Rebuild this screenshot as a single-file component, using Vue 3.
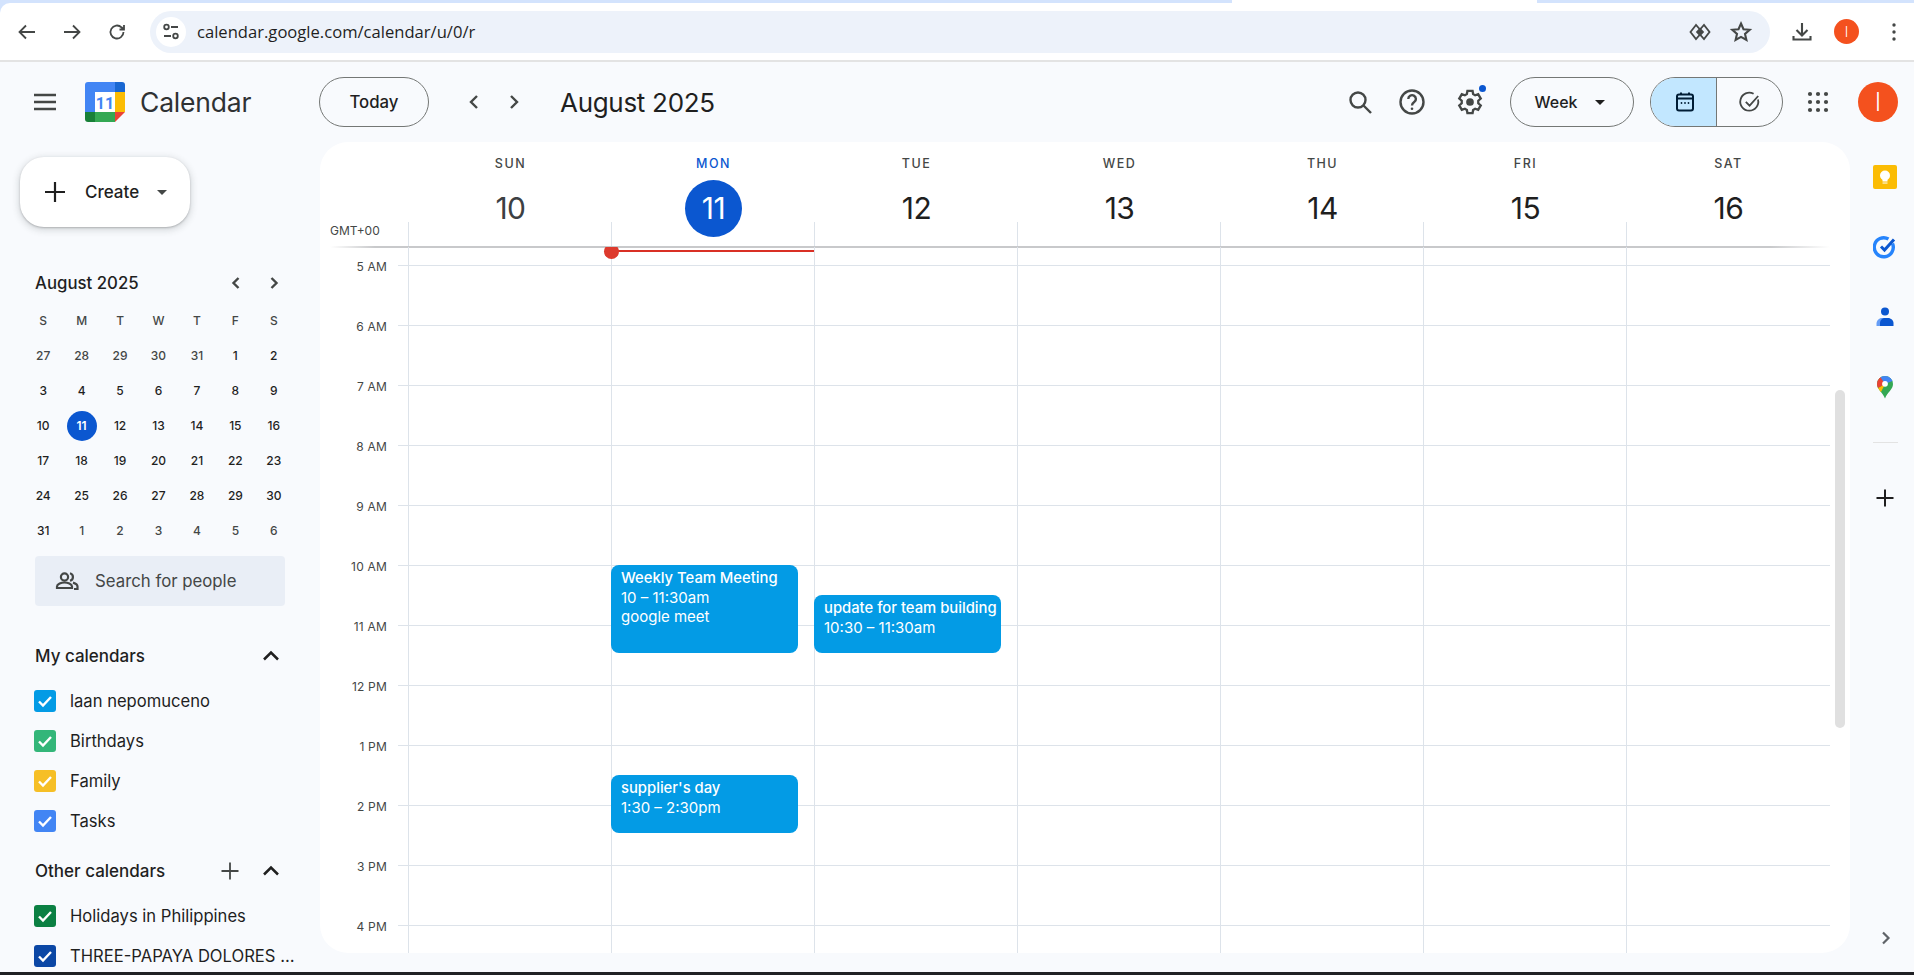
<script setup>
const weekDays = [
  { name: 'SUN', num: 10 }, { name: 'MON', num: 11, today: true }, { name: 'TUE', num: 12 },
  { name: 'WED', num: 13 }, { name: 'THU', num: 14 }, { name: 'FRI', num: 15 }, { name: 'SAT', num: 16 }
]
const hours = ['5 AM','6 AM','7 AM','8 AM','9 AM','10 AM','11 AM','12 PM','1 PM','2 PM','3 PM','4 PM']
const cells = [0,1,2,3,4,5,6]
const miniHead = ['S','M','T','W','T','F','S']
const mini = [
  [27,28,29,30,31,1,2],[3,4,5,6,7,8,9],[10,11,12,13,14,15,16],[17,18,19,20,21,22,23],
  [24,25,26,27,28,29,30],[31,1,2,3,4,5,6]
]
const muted = (r, c) => (r === 0 && c < 5) || r === 5 && c > 0
const myCals = [
  { n: 'laan nepomuceno', c: '#039be5' }, { n: 'Birthdays', c: '#33b679' },
  { n: 'Family', c: '#f6bf26' }, { n: 'Tasks', c: '#4285f4' }
]
const otherCals = [
  { n: 'Holidays in Philippines', c: '#0b8043' }, { n: 'THREE-PAPAYA DOLORES CONSTRUCTION', c: '#0b47a5' }
]
const events = [
  { t: 'Weekly Team Meeting', l: ['10 – 11:30am', 'google meet'], x: 213, y: 318, w: 187, h: 88 },
  { t: 'update for team building', l: ['10:30 – 11:30am'], x: 416, y: 348, w: 187, h: 58 },
  { t: "supplier's day", l: ['1:30 – 2:30pm'], x: 213, y: 528, w: 187, h: 58 }
]
const box = (e) => ({ left: e.x + 'px', top: e.y + 'px', width: e.w + 'px', height: e.h + 'px' })
</script>

<template>
  <div class="page">
    <div class="chrome-wrap">
      <div class="tabstrip"><div class="strip-a"></div><div class="strip-gap"></div><div class="strip-b"></div></div>
      <div class="chrome">
        <div class="nav">
          <svg width="24" height="24" viewBox="0 0 24 24"><path d="M20 12H5M11 5.500 4.500 12l6.500 6.500" class="ci"/></svg>
          <svg width="24" height="24" viewBox="0 0 24 24"><path d="M4 12h15M13 5.500 19.500 12 13 18.500" class="ci"/></svg>
          <svg width="24" height="24" viewBox="0 0 24 24"><path d="M18.500 12a6.500 6.500 0 1 1-2-4.700L19 9.500M19 5v4.500h-4.500" class="ci"/></svg>
        </div>
        <div class="omnibox">
          <span class="site">
            <svg width="20" height="20" viewBox="0 0 20 20"><circle cx="5.500" cy="5" r="2.300" class="ci"/><path d="M10 5h7M3 14h7" class="ci"/><circle cx="14.500" cy="14" r="2.300" class="ci"/></svg>
          </span>
          <span class="url">calendar.google.com/calendar/u/0/r</span>
          <svg class="diamond" width="22" height="22" viewBox="0 0 22 22"><path d="M7 4 1.500 11 7 18l4-4.500L15 18l5.500-7L15 4l-4 4.500z" fill="none" stroke="#444746" stroke-width="1.800"/><path d="M11 6.500 15.200 11 11 15.500 6.800 11z" fill="#444746"/></svg>
          <svg class="star" width="24" height="24" viewBox="0 0 24 24"><path d="m12 3.500 2.500 5.700 6.200.6-4.700 4.100 1.400 6.100L12 16.900l-5.400 3.100L8 13.900 3.300 9.800l6.200-.6z" class="ci bold"/></svg>
        </div>
        <div class="chrome-right">
          <svg width="24" height="24" viewBox="0 0 24 24"><path d="M12 3v12M6.500 10l5.500 5.500 5.500-5.500M3.500 16v3.500h17V16" class="ci bold"/></svg>
          <span class="ava-small">I</span>
          <svg width="20" height="24" viewBox="0 0 20 24"><circle cx="10" cy="5" r="1.700" fill="#444746"/><circle cx="10" cy="12" r="1.700" fill="#444746"/><circle cx="10" cy="19" r="1.700" fill="#444746"/></svg>
        </div>
      </div>
    </div>

    <div class="app">
      <header class="topbar">
        <div class="brand">
          <svg class="burger" width="24" height="24" viewBox="0 0 24 24"><path d="M1 3.800h22v2.400H1zM1 10.800h22v2.400H1zM1 17.800h22v2.400H1z" fill="#444746"/></svg>
          <svg class="logo" width="40" height="40" viewBox="0 0 40 40">
            <path d="M10 0h20v10H10z" fill="#4285f4"/>
            <path d="M30 0h7a3 3 0 0 1 3 3v7H30z" fill="#1967d2"/>
            <path d="M0 3a3 3 0 0 1 3-3h7v30H0z" fill="#4285f4"/>
            <path d="M30 10h10v20H30z" fill="#fbbc04"/>
            <path d="M10 30h20v10H10z" fill="#34a853"/>
            <path d="M0 30h10v10H3a3 3 0 0 1-3-3z" fill="#188038"/>
            <path d="M30 30h10L30 40z" fill="#ea4335"/>
            <rect x="10" y="10" width="20" height="20" fill="#fff"/>
            <text x="20" y="26.500" text-anchor="middle" class="logo-num">11</text>
          </svg>
          <span class="brand-name">Calendar</span>
        </div>
        <button class="pill today-btn">Today</button>
        <div class="range-nav">
          <svg width="24" height="24" viewBox="0 0 24 24"><path d="M15 6 9 12l6 6" class="chev"/></svg>
          <svg width="24" height="24" viewBox="0 0 24 24"><path d="m9 6 6 6-6 6" class="chev"/></svg>
        </div>
        <h1 class="range">August 2025</h1>
        <div class="tools">
          <svg width="28" height="28" viewBox="0 0 28 28"><circle cx="12" cy="12" r="7.500" class="ti"/><path d="m17.500 17.500 7.500 7.500" class="ti"/></svg>
          <svg width="28" height="28" viewBox="0 0 28 28"><circle cx="14" cy="14" r="11.500" class="ti"/><path d="M10.300 11a3.800 3.800 0 1 1 5.900 3.100c-1.300.9-2.200 1.600-2.200 3.400" class="ti"/><circle cx="14" cy="20.800" r="1.300" fill="#444746"/></svg>
          <span class="gear">
            <svg width="28" height="28" viewBox="0 0 24 24"><path d="m9.800 2.500h4.400l.5 2.700 1.700 1 2.600-.9 2.200 3.800-2.100 1.800v2.200l2.100 1.800-2.200 3.800-2.600-.9-1.700 1-.5 2.700H9.800l-.5-2.700-1.700-1-2.600.9-2.200-3.800 2.100-1.800v-2.200L2.800 9.100 5 5.300l2.600.9 1.700-1z" class="ti2"/><circle cx="12" cy="12" r="3.300" fill="#444746"/></svg>
            <i class="gear-dot"></i>
          </span>
        </div>
        <button class="pill week">Week <i class="caret"></i></button>
        <div class="switch">
          <span class="sw on">
            <svg width="24" height="24" viewBox="0 0 24 24"><rect x="4" y="4.500" width="16" height="16" rx="2" fill="none" stroke="#001d35" stroke-width="2"/><path d="M4 8.500h16M8 2.500v2M16 2.500v2" stroke="#001d35" stroke-width="2" fill="none"/><circle cx="8.500" cy="13" r=".9" fill="#001d35"/><circle cx="12" cy="13" r=".9" fill="#001d35"/><circle cx="15.500" cy="13" r=".9" fill="#001d35"/></svg>
          </span>
          <span class="sw">
            <svg width="24" height="24" viewBox="0 0 24 24"><path d="M20 9.500a9 9 0 1 1-4.400-5.700" class="ti3"/><path d="m7.800 11.800 3.800 3.800 8.600-9.600" class="ti3"/></svg>
          </span>
        </div>
        <svg class="apps" width="24" height="24" viewBox="0 0 24 24"><g fill="#444746"><circle cx="4" cy="4" r="2.100"/><circle cx="12" cy="4" r="2.100"/><circle cx="20" cy="4" r="2.100"/><circle cx="4" cy="12" r="2.100"/><circle cx="12" cy="12" r="2.100"/><circle cx="20" cy="12" r="2.100"/><circle cx="4" cy="20" r="2.100"/><circle cx="12" cy="20" r="2.100"/><circle cx="20" cy="20" r="2.100"/></g></svg>
        <span class="avatar">I</span>
      </header>

      <div class="body">
        <aside class="side">
          <button class="create">
            <svg width="24" height="24" viewBox="0 0 24 24"><path d="M12 2v20M2 12h20" stroke="#1f1f1f" stroke-width="2.200" fill="none"/></svg>
            <span>Create</span>
            <i class="caret grey"></i>
          </button>

          <div class="mini-title">
            <span>August 2025</span>
            <div class="mini-nav">
              <svg width="20" height="20" viewBox="0 0 20 20"><path d="M12.500 5 7.500 10l5 5" class="chev"/></svg>
              <svg width="20" height="20" viewBox="0 0 20 20"><path d="m7.500 5 5 5-5 5" class="chev"/></svg>
            </div>
          </div>
          <div class="mini-grid">
            <span v-for="(h, i) in miniHead" :key="'h' + i" class="mini-h">{{ h }}</span>
            <template v-for="(row, r) in mini" :key="r">
              <span v-for="(d, c) in row" :key="c" class="mini-d" :class="{ muted: muted(r, c) }">
                <b v-if="d === 11 && r === 2" class="mini-today">{{ d }}</b>
                <template v-else>{{ d }}</template>
              </span>
            </template>
          </div>

          <div class="people">
            <svg width="24" height="24" viewBox="0 0 24 24"><circle cx="9.500" cy="8" r="3.600" fill="none" stroke="#444746" stroke-width="2.200"/><path d="M2 19v-1.500c0-2.500 4.500-4 7.500-4s7.500 1.500 7.500 4V19z" fill="none" stroke="#444746" stroke-width="2.200"/><path d="M15 4.300a3.800 3.800 0 0 1 0 7.400M18 13.600c2.200.7 4.500 1.800 4.500 3.900V20H19" fill="none" stroke="#444746" stroke-width="2.200"/></svg>
            <span>Search for people</span>
          </div>

          <div class="sec-title my">
            <span>My calendars</span>
            <svg width="20" height="20" viewBox="0 0 20 20"><path d="M3 13.500l7-7 7 7" class="up"/></svg>
          </div>
          <div v-for="c in myCals" :key="c.n" class="cal">
            <i class="check" :style="{ background: c.c }"><svg width="22" height="22" viewBox="0 0 22 22"><path d="m5 11.500 4 4 8-8.500" fill="none" stroke="#fff" stroke-width="2.400"/></svg></i>
            <span class="cal-name">{{ c.n }}</span>
          </div>

          <div class="sec-title other">
            <span>Other calendars</span>
            <svg class="sec-plus" width="20" height="20" viewBox="0 0 20 20"><path d="M10 1.500v17M1.500 10h17" stroke="#444746" stroke-width="1.800" fill="none"/></svg>
            <svg width="20" height="20" viewBox="0 0 20 20"><path d="M3 13.500l7-7 7 7" class="up"/></svg>
          </div>
          <div v-for="c in otherCals" :key="c.n" class="cal">
            <i class="check" :style="{ background: c.c }"><svg width="22" height="22" viewBox="0 0 22 22"><path d="m5 11.500 4 4 8-8.500" fill="none" stroke="#fff" stroke-width="2.400"/></svg></i>
            <span class="cal-name">{{ c.n }}</span>
          </div>
        </aside>

        <main class="card">
          <div class="card-head">
            <div class="day-heads">
              <div v-for="d in weekDays" :key="d.num" class="dh" :class="{ current: d.today }">
                <span class="dh-name">{{ d.name }}</span>
                <span class="dh-num">{{ d.num }}</span>
              </div>
            </div>
            <div class="allday">
              <span class="gmt">GMT+00</span>
              <i v-for="n in cells" :key="n" class="ad-cell"></i>
            </div>
            <div class="head-rule"></div>
          </div>
          <div class="scroller">
            <div class="times"><span v-for="h in hours" :key="h" class="time">{{ h }}</span></div>
            <div class="gridwrap">
              <div class="row first"><i v-for="n in cells" :key="n" class="cell"></i></div>
              <div v-for="h in hours" :key="'r' + h" class="row"><i v-for="n in cells" :key="n" class="cell"></i></div>
              <div class="now"><i class="now-dot"></i></div>
              <div v-for="e in events" :key="e.t" class="event" :style="box(e)">
                <strong>{{ e.t }}</strong>
                <span v-for="x in e.l" :key="x">{{ x }}</span>
              </div>
            </div>
            <div class="thumb"></div>
          </div>
        </main>

        <nav class="rail">
          <svg width="24" height="24" viewBox="0 0 24 24"><rect width="24" height="24" rx="2" fill="#fbbc04"/><circle cx="12" cy="10.500" r="5" fill="#fff"/><rect x="9.500" y="14" width="5" height="2.500" fill="#fff"/><rect x="9.500" y="17.300" width="5" height="1.500" fill="#fbe9a8"/></svg>
          <svg width="24" height="24" viewBox="0 0 24 24"><path d="M19.500 8.500a9.500 9.500 0 1 1-4-4.500" fill="none" stroke="#2684fc" stroke-width="3.400"/><path d="m8 11.500 3.500 3.500L21 4.500" fill="none" stroke="#0b57d0" stroke-width="3"/></svg>
          <svg width="24" height="24" viewBox="0 0 24 24"><circle cx="12" cy="6.500" r="4" fill="#0b57d0"/><path d="M3.500 21v-2.500c0-3 2.500-5.500 5.500-5.500h2v8z" fill="#669df6"/><path d="M7 21v-3c0-3 2.500-5 5-5h3c3 0 5.500 2.500 5.500 5v3z" fill="#0b57d0"/></svg>
          <svg width="24" height="24" viewBox="0 0 24 24">
            <clipPath id="pin"><path d="M12 1a8 8 0 0 0-8 8c0 5.500 5.500 8 8 14.500C14.500 17 20 14.500 20 9a8 8 0 0 0-8-8z"/></clipPath>
            <g clip-path="url(#pin)">
              <rect width="24" height="24" fill="#34a853"/>
              <path d="M2 14.500 12 9l-5 10z" fill="#fbbc04"/>
              <path d="M2 0h5l5 9-10 5.500z" fill="#ea4335"/>
              <path d="M6 0h16v5L12 9z" fill="#4285f4"/>
              <circle cx="12" cy="8.800" r="2.900" fill="#fff"/>
            </g>
          </svg>
          <i class="rail-sep"></i>
          <svg width="24" height="24" viewBox="0 0 24 24"><path d="M12 3.500v17M3.500 12h17" stroke="#1f1f1f" stroke-width="2" fill="none"/></svg>
          <svg class="rail-end" width="24" height="24" viewBox="0 0 24 24"><path d="m9 6.500 5.500 5.500L9 17.500" fill="none" stroke="#5f6368" stroke-width="2.200"/></svg>
        </nav>
      </div>
    </div>
    <div class="taskbar"></div>
  </div>
</template>

<style>
html, body { margin: 0; height: 100%; overflow: hidden; background: #f8fafd; }
</style>

<style scoped>
.page { width: 1914px; height: 975px; display: flex; flex-direction: column; overflow: hidden; font-family: Roboto, "Liberation Sans", sans-serif; color: #1f1f1f; background: #f8fafd; }
.chrome-wrap { flex: none; background: #d3e3fd; }
.tabstrip { height: 3px; display: flex; }
.strip-a { width: 1232px; background: #d3e3fd; }
.strip-gap { width: 305px; background: #fff; }
.strip-b { flex: 1; background: #d3e3fd; }
.chrome { height: 57px; background: #fff; border-radius: 10px 0 0 0; display: flex; align-items: center; box-sizing: border-box; padding: 0 0 0 15px; }
.chrome svg { flex: none; }
.nav { display: flex; gap: 21px; width: 135px; flex: none; }
.ci { fill: none; stroke: #444746; stroke-width: 1.800; }
.ci.bold { stroke-width: 2.100; }
.omnibox { width: 1620px; height: 42px; flex: none; border-radius: 21px; background: #edf2fa; display: flex; align-items: center; box-sizing: border-box; padding: 0 17px 0 6px; }
.site { width: 30px; height: 30px; border-radius: 50%; background: #fff; display: flex; align-items: center; justify-content: center; flex: none; }
.url { font-family: "Open Sans", "Liberation Sans", sans-serif; font-size: 16.600px; color: #1f1f1f; margin-left: 11px; flex: 1; white-space: nowrap; }
.diamond { margin-right: 18px; }
.chrome-right { display: flex; align-items: center; margin-left: 20px; }
.ava-small { width: 25px; height: 25px; border-radius: 50%; background: #f4511e; color: #fff; font-size: 15px; font-weight: 300; display: flex; align-items: center; justify-content: center; margin-left: 20px; margin-right: 25px; }

.app { flex: 1; min-height: 0; display: flex; flex-direction: column; border-top: 2px solid #e3e3e3; }
.topbar { height: 80px; flex: none; display: flex; align-items: center; box-sizing: border-box; }
.brand { width: 319px; flex: none; display: flex; align-items: center; }
.burger { margin-left: 33px; margin-right: 16px; flex: none; }
.logo { flex: none; margin-left: 12px; }
.logo-num { font: 700 16px Roboto, sans-serif; fill: #4285f4; }
.brand-name { font-family: Inter, sans-serif; font-size: 26.500px; color: #2f3133; margin-left: 15px; letter-spacing: -.2px; }
.pill { height: 50px; box-sizing: border-box; border: 1px solid #747775; border-radius: 25px; background: transparent; font-family: Inter, sans-serif; font-weight: 500; font-size: 16px; color: #1f1f1f; padding: 0; }
.today-btn { width: 110px; flex: none; font-size: 16.800px; }
.range-nav { display: flex; gap: 16px; margin-left: 33px; width: 64px; }
.chev { fill: none; stroke: #444746; stroke-width: 2.400; }
.range { margin: 0 0 0 34px; font-family: Inter, sans-serif; font-weight: 400; font-size: 26px; letter-spacing: -.3px; color: #1f1f1f; flex: 1; }
.tools { display: flex; align-items: center; gap: 24px; margin-right: 26px; }
.ti { fill: none; stroke: #444746; stroke-width: 2.400; }
.ti2 { fill: none; stroke: #444746; stroke-width: 2; }
.ti3 { fill: none; stroke: #444746; stroke-width: 1.800; }
.gear { position: relative; display: flex; margin-left: 6px; }
.gear-dot { position: absolute; right: -2px; top: -3px; width: 7px; height: 7px; border-radius: 50%; background: #0b57d0; }
.week { width: 124px; flex: none; display: flex; align-items: center; justify-content: center; gap: 18px; padding-right: 4px; }
.caret { display: inline-block; width: 0; height: 0; border: 5px solid transparent; border-top-color: #1f1f1f; border-bottom: 0; }
.caret.grey { border-top-color: #444746; }
.switch { margin-left: 16px; width: 133px; height: 50px; flex: none; display: flex; box-sizing: border-box; border: 1px solid #747775; border-radius: 25px; overflow: hidden; }
.sw { flex: 1; display: flex; align-items: center; justify-content: center; }
.sw.on { background: #c2e7ff; border-right: 1px solid #747775; flex: none; width: 66px; box-sizing: border-box; padding-left: 2px; }
.apps { margin-left: 23px; flex: none; }
.avatar { width: 40px; height: 40px; flex: none; border-radius: 50%; background: #f4511e; color: #fff; font-family: Roboto, sans-serif; font-size: 26px; font-weight: 300; display: flex; align-items: center; justify-content: center; margin-left: 28px; margin-right: 16px; }

.body { flex: 1; min-height: 0; display: flex; }
.side { width: 320px; flex: none; box-sizing: border-box; padding: 15px 0 0 0; overflow: hidden; }
.create { width: 170px; height: 70px; margin-left: 20px; border: 0; background: #fff; border-radius: 24px; display: flex; align-items: center; padding: 0 0 0 23px; box-sizing: border-box; box-shadow: 0 1px 2px rgba(60,64,67,.3), 0 2px 6px 2px rgba(60,64,67,.15); font-family: Inter, sans-serif; font-weight: 500; font-size: 17px; color: #1f1f1f; }
.create span { margin-left: 18px; margin-right: 18px; }
.mini-title { margin: 43px 0 0 35px; width: 251px; display: flex; justify-content: space-between; align-items: center; font-family: Inter, sans-serif; font-weight: 500; font-size: 16.800px; height: 26px; }
.mini-nav { display: flex; gap: 18px; margin-right: 2px; }
.mini-grid { margin: 7px 0 0 24px; width: 269px; display: grid; grid-template-columns: repeat(7, 1fr); grid-auto-rows: 35px; font-family: Inter, sans-serif; font-size: 12px; font-weight: 500; }
.mini-h, .mini-d { display: flex; align-items: center; justify-content: center; }
.mini-h { color: #444746; font-size: 12px; }
.mini-d.muted { color: #444746; }
.mini-today { width: 30px; height: 30px; border-radius: 50%; background: #0b57d0; color: #fff; display: flex; align-items: center; justify-content: center; font-weight: 600; }
.people { margin: 8px 0 0 35px; width: 250px; height: 50px; background: #e9eef6; border-radius: 4px; display: flex; align-items: center; box-sizing: border-box; padding-left: 20px; gap: 16px; font-family: Inter, sans-serif; font-size: 16.800px; color: #444746; }
.sec-title { margin-left: 35px; width: 246px; display: flex; align-items: center; font-family: Inter, sans-serif; font-weight: 500; font-size: 17px; color: #1f1f1f; height: 30px; }
.sec-title span { flex: 1; }
.sec-title svg { flex: none; }
.sec-title.my { margin-top: 35px; margin-bottom: 10px; }
.sec-title.other { margin-top: 15px; margin-bottom: 10px; }
.sec-plus { margin-right: 21px; }
.up { fill: none; stroke: #1f1f1f; stroke-width: 2.500; }
.cal { height: 40px; display: flex; align-items: center; margin-left: 34px; }
.check { width: 22px; height: 22px; border-radius: 3px; flex: none; display: flex; }
.cal-name { margin-left: 14px; width: 226px; font-family: Inter, sans-serif; font-size: 16.600px; color: #1f1f1f; white-space: nowrap; overflow: hidden; text-overflow: ellipsis; }

.card { width: 1530px; flex: none; height: 811px; background: #fff; border-radius: 28px; overflow: hidden; display: flex; flex-direction: column; }
.card-head { flex: none; height: 105px; position: relative; }
.day-heads { display: grid; grid-template-columns: repeat(7, 203px); margin-left: 89px; }
.dh { display: flex; flex-direction: column; align-items: center; }
.dh-name { font-family: Inter, sans-serif; font-weight: 500; font-size: 12.500px; letter-spacing: 1.500px; color: #444746; line-height: 16px; margin-top: 14px; }
.dh-num { width: 57px; height: 57px; box-sizing: border-box; padding-bottom: 1px; border-radius: 50%; display: flex; align-items: center; justify-content: center; font-family: Inter, sans-serif; font-size: 30px; color: #1f1f1f; margin-top: 8px; position: relative; letter-spacing: -.5px; }
.dh:first-child .dh-num { color: #3c4043; }
.dh.current .dh-name { color: #0b57d0; }
.dh.current .dh-num { background: #0b57d0; color: #fff; }
.allday { position: absolute; left: 0; right: 20px; top: 80px; height: 25px; display: flex; padding-left: 88px; }
.gmt { position: absolute; left: 10px; top: 2px; font-family: Inter, sans-serif; font-size: 12px; color: #444746; line-height: 14px; }
.ad-cell { width: 203px; box-sizing: border-box; border-left: 1px solid #dde3ea; flex: none; }
.head-rule { position: absolute; left: 10px; right: 20px; bottom: -1px; height: 2px; background: linear-gradient(90deg, transparent, #c8c9cb 3%, #c8c9cb 96%, transparent); }
.scroller { flex: 1; min-height: 0; display: flex; position: relative; overflow: hidden; }
.times { width: 78px; flex: none; box-sizing: border-box; padding-right: 11px; margin-top: -10px; font-family: Inter, sans-serif; font-size: 12px; letter-spacing: .2px; color: #444746; text-align: right; display: flex; flex-direction: column; }
.time { height: 60px; line-height: 60px; flex: none; }
.gridwrap { width: 1432px; flex: none; position: relative; }
.row { height: 60px; display: flex; padding-left: 10px; box-sizing: border-box; border-bottom: 1px solid #dde3ea; }
.row.first { height: 19px; }
.cell { width: 203px; flex: none; box-sizing: border-box; border-left: 1px solid #dde3ea; }
.now { position: absolute; left: 213px; top: 3px; width: 203px; height: 2px; background: #d93025; }
.now-dot { position: absolute; left: -7px; top: -6px; width: 15px; height: 15px; border-radius: 50%; background: #dd3a2d; }
.event { position: absolute; background: #039be5; border-radius: 8px; color: #fff; box-sizing: border-box; padding: 4px 0 0 10px; display: flex; flex-direction: column; font-family: Inter, sans-serif; font-size: 15px; line-height: 19px; white-space: nowrap; overflow: hidden; }
.event strong { font-weight: 500; font-size: 14.800px; }
.thumb { position: absolute; right: 5px; top: 143px; width: 10px; height: 338px; border-radius: 5px; background: #e0e0e0; }

.rail { flex: 1; position: relative; display: flex; flex-direction: column; align-items: center; gap: 46px; padding: 23px 0 0 6px; }
.rail svg { flex: none; }
.rail-sep { width: 25px; height: 1px; background: #e3e3e3; margin-top: -3px; margin-bottom: -3px; flex: none; }
.rail-end { position: absolute; bottom: 22px; left: 24px; }
.taskbar { height: 3px; flex: none; background: #202124; }
</style>
